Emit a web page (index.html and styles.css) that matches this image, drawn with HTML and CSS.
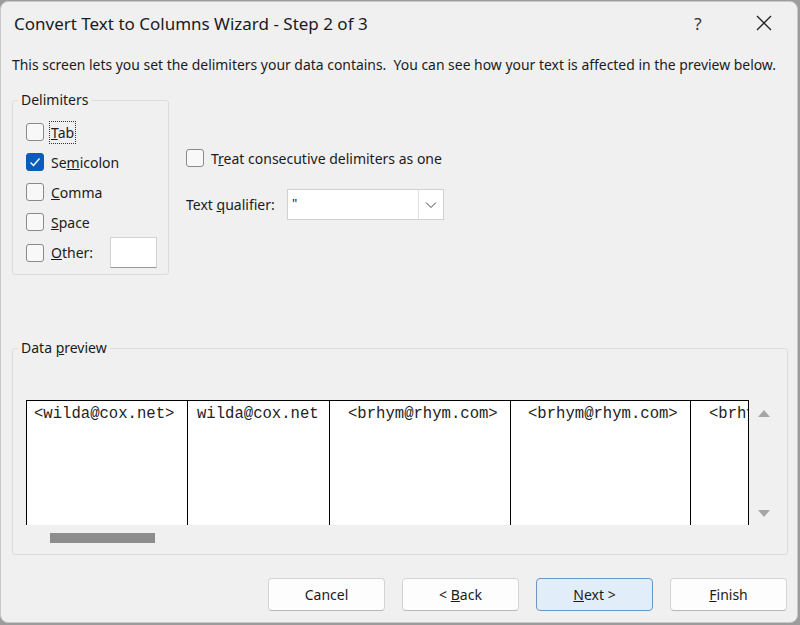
FILE: index.html
```html
<html>

<head>
    <title>Convert Text to Columns Wizard</title>
    <link rel="stylesheet" href="styles.css">
</head>

<body>
    <div class="dialog">
        <div class="title-bar">
            <span class="title">Convert Text to Columns Wizard - Step 2 of 3</span>
            <span class="help">?</span>
            <span class="close">
                <svg width="16" height="16" viewBox="0 0 16 16"><path d="M1 1 L15 15 M15 1 L1 15" stroke="#222" stroke-width="1.3" fill="none"/></svg>
            </span>
        </div>

        <p class="intro">This screen lets you set the delimiters your data contains.&nbsp; You can see how your text is affected in the preview below.</p>

        <div class="options">
            <fieldset class="delims">
                <legend>Delimiters</legend>
                <div class="row"><span class="box"></span><span class="label focus"><u>T</u>ab</span></div>
                <div class="row"><span class="box checked"><svg width="16" height="16" viewBox="0 0 16 16"><path d="M3.5 8.5 L6.5 11.5 L12.5 4.5" stroke="#fff" stroke-width="1.3" fill="none"/></svg></span><span class="label">Se<u>m</u>icolon</span></div>
                <div class="row"><span class="box"></span><span class="label"><u>C</u>omma</span></div>
                <div class="row"><span class="box"></span><span class="label"><u>S</u>pace</span></div>
                <div class="row other"><span class="box"></span><span class="label"><u>O</u>ther:</span><span class="textbox"></span></div>
            </fieldset>

            <div class="side">
                <div class="row"><span class="box"></span><span class="label">T<u>r</u>eat consecutive delimiters as one</span></div>
                <div class="qualifier">
                    <span class="qlabel">Text <u>q</u>ualifier:</span>
                    <span class="combo">
                        <span class="combo-value">"</span>
                        <span class="combo-btn"><svg width="12" height="8" viewBox="0 0 12 8"><path d="M1 1.5 L6 6.5 L11 1.5" stroke="#444" stroke-width="1" fill="none"/></svg></span>
                    </span>
                </div>
            </div>
        </div>

        <fieldset class="preview-group">
            <legend>Data <u>p</u>review</legend>
            <div class="preview-wrap">
                <div class="preview">
                    <div class="col c1">&lt;wilda@cox.net&gt;</div>
                    <div class="col c2">wilda@cox.net</div>
                    <div class="col c3">&lt;brhym@rhym.com&gt;</div>
                    <div class="col c4">&lt;brhym@rhym.com&gt;</div>
                    <div class="col c5">&lt;brhym@rhym.com&gt;</div>
                </div>
                <div class="vscroll">
                    <span class="arrow-up"></span>
                    <span class="arrow-down"></span>
                </div>
            </div>
            <div class="hscroll"><span class="thumb"></span></div>
        </fieldset>

        <div class="buttons">
            <button>Cancel</button>
            <button>&lt; <u>B</u>ack</button>
            <button class="default"><u>N</u>ext &gt;</button>
            <button><u>F</u>inish</button>
        </div>
    </div>
</body>

</html>
```

FILE: styles.css
```css
body {
    margin: 0;
    background-color: #9c9c9c;
    font-family: "Noto Sans", "Open Sans", sans-serif;
    color: #1b1b1b;
}

.dialog {
    margin: 1px 0 0 0;
    width: 798px;
    height: 622px;
    box-sizing: border-box;
    background-color: #f0f0f0;
    border: 1px solid #c9c9c9;
    border-radius: 8px;
    padding: 0 10px 0 11px;
}

.title-bar {
    height: 42px;
    display: flex;
    align-items: center;
    margin-left: 2px;
}

.title {
    font-size: 17px;
    flex: 1;
}

.help {
    width: 40px;
    text-align: center;
    font-size: 17px;
    color: #333;
}

.close {
    width: 46px;
    margin-left: 23px;
    margin-right: 0;
    display: flex;
    justify-content: center;
}

.intro {
    margin: 11px 0 0 0;
    font-size: 13.93px;
    line-height: 20px;
    white-space: nowrap;
}

.options {
    display: flex;
    margin-top: 15px;
}

fieldset {
    margin: 0;
    border: 1px solid #dcdcdc;
    border-radius: 3px;
}

legend {
    font-size: 14px;
    line-height: 20px;
    padding: 0 3px;
}

.delims {
    width: 157px;
    height: 185px;
    box-sizing: border-box;
    padding: 7px 10px 6px 13px;
}

.delims legend {
    margin-left: -8px;
}

.row {
    display: flex;
    align-items: center;
    height: 30px;
    font-size: 14px;
}

.row.other {
    height: 31px;
}

.box {
    width: 18px;
    height: 18px;
    box-sizing: border-box;
    border: 1px solid #8a8a8a;
    border-radius: 3px;
    background-color: #f8f8f8;
    display: flex;
    align-items: center;
    justify-content: center;
    flex-shrink: 0;
}

.box.checked {
    background-color: #0b5cba;
    border-color: #0b5cba;
}

.label {
    margin-left: 7px;
}

.focus {
    outline: 1px dotted #333;
    outline-offset: 1px;
}

.textbox {
    width: 47px;
    height: 31px;
    box-sizing: border-box;
    background-color: #fff;
    border: 1px solid #d3d3d3;
    border-bottom-color: #9a9a9a;
    margin-left: 17px;
}

.side {
    margin-left: 17px;
    margin-top: 59px;
}

.side .row {
    height: 18px;
}

.qualifier {
    display: flex;
    align-items: center;
    margin-top: 22px;
    font-size: 14px;
}

.qlabel {
    width: 101px;
}

.combo {
    width: 157px;
    height: 31px;
    box-sizing: border-box;
    background-color: #fff;
    border: 1px solid #d0d0d0;
    display: flex;
}

.combo-value {
    flex: 1;
    padding: 4px 0 0 4px;
    font-size: 13px;
}

.combo-btn {
    width: 24px;
    border-left: 1px solid #e2e2e2;
    display: flex;
    align-items: center;
    justify-content: center;
}

.preview-group {
    margin-top: 63px;
    width: 776px;
    height: 217px;
    box-sizing: border-box;
    padding: 0 0 0 13px;
}

.preview-group legend {
    margin-left: -8px;
}

.preview-wrap {
    display: flex;
    margin-top: 42px;
}

.preview {
    width: 723px;
    height: 125px;
    box-sizing: border-box;
    background-color: #fff;
    border: 1px solid #000;
    border-bottom: none;
    display: flex;
    overflow: hidden;
    font-family: "Liberation Mono", monospace;
    font-size: 15.6px;
    color: #222;
}

.col {
    box-sizing: border-box;
    border-right: 1px solid #000;
    padding-top: 4px;
    line-height: 18px;
    white-space: nowrap;
    flex-shrink: 0;
}

.c1 { width: 161px; padding-left: 7px; }
.c2 { width: 142px; padding-left: 9px; }
.c3 { width: 181px; padding-left: 18px; }
.c4 { width: 180px; padding-left: 17px; }
.c5 { width: 57px; padding-left: 18px; border-right: none; overflow: hidden; }

.vscroll {
    width: 29px;
    display: flex;
    flex-direction: column;
    align-items: center;
    justify-content: space-between;
    padding: 10px 0 8px 0;
    box-sizing: border-box;
}

.arrow-up {
    width: 0;
    height: 0;
    border-left: 6px solid transparent;
    border-right: 6px solid transparent;
    border-bottom: 7px solid #a6a6a6;
}

.arrow-down {
    width: 0;
    height: 0;
    border-left: 6px solid transparent;
    border-right: 6px solid transparent;
    border-top: 7px solid #a6a6a6;
}

.hscroll {
    height: 25px;
    display: flex;
    align-items: center;
    padding-left: 24px;
}

.thumb {
    width: 105px;
    height: 10px;
    background-color: #8d8d8d;
}

.buttons {
    display: flex;
    justify-content: flex-end;
    gap: 17px;
    margin-top: 23px;
}

button {
    width: 117px;
    height: 33px;
    font-family: "Noto Sans", "Open Sans", sans-serif;
    font-size: 14px;
    color: #1b1b1b;
    background-color: #fdfdfd;
    border: 1px solid #d4d4d4;
    border-bottom-color: #b8b8b8;
    border-radius: 4px;
}

button.default {
    background-color: #e1edf8;
    border: 1px solid #6a98c4;
}
```
